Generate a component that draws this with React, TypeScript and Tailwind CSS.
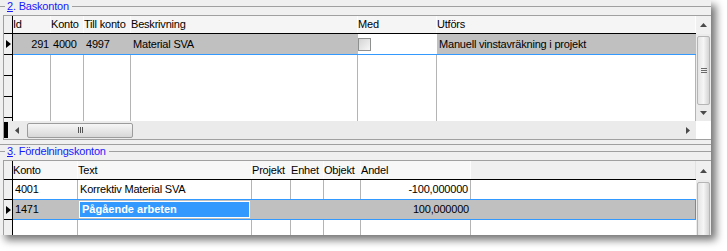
import React from "react";

type Col = { label: string; w: string; value?: string; right?: boolean; check?: boolean; edit?: boolean };

const topCols: Col[] = [
  { label: "Id", w: "w-[38px]", value: "291", right: true },
  { label: "Konto", w: "w-[33px]", value: "4000" },
  { label: "Till konto", w: "w-[47px]", value: "4997" },
  { label: "Beskrivning", w: "w-[227px]", value: "Material SVA" },
  { label: "Med", w: "w-[79px]", check: true },
  { label: "Utförs", w: "w-[259px]", value: "Manuell vinstavräkning i projekt" },
];

const bottomCols: Col[] = [
  { label: "Konto", w: "w-[65px]" },
  { label: "Text", w: "w-[174px]" },
  { label: "Projekt", w: "w-[39px]" },
  { label: "Enhet", w: "w-[33px]" },
  { label: "Objekt", w: "w-[37px]" },
  { label: "Andel", w: "w-[110px]", right: true },
];

const bottomRows = [
  ["4001", "Korrektiv Material SVA", "", "", "", "-100,000000"],
  ["1471", "Pågående arbeten", "", "", "", "100,000000"],
  ["", "", "", "", "", ""],
];

const UpArrow = () => (
  <svg width="7" height="4" viewBox="0 0 7 4">
    <path d="M0 4 L3.5 0 L7 4 Z" fill="#4a4a4a" />
  </svg>
);
const DownArrow = () => (
  <svg width="7" height="4" viewBox="0 0 7 4">
    <path d="M0 0 L7 0 L3.5 4 Z" fill="#4a4a4a" />
  </svg>
);
const LeftArrow = () => (
  <svg width="4" height="7" viewBox="0 0 4 7">
    <path d="M4 0 L0 3.5 L4 7 Z" fill="#4a4a4a" />
  </svg>
);
const RightArrow = () => (
  <svg width="4" height="7" viewBox="0 0 4 7">
    <path d="M0 0 L4 3.5 L0 7 Z" fill="#4a4a4a" />
  </svg>
);
const RowArrow = () => (
  <svg width="5" height="8" viewBox="0 0 5 8">
    <path d="M0 0 L5 4 L0 8 Z" fill="#000" />
  </svg>
);

const RowHead = ({ arrow, h }: { arrow?: boolean; h: string }) => (
  <div className={`w-[9px] shrink-0 ${h} bg-[#f0f0f0] border-r border-b border-black flex items-center justify-center`}>
    {arrow && <RowArrow />}
  </div>
);

const Title = ({ n, text }: { n: string; text: string }) => (
  <div className="flex items-start h-[15px]">
    <div className="w-[5px] mt-[6px] border-t border-[#a0a0a0]" />
    <span className="ml-[2px] leading-[12px] text-[#1818ff]">
      <span className="underline">{n}</span>. {text}
    </span>
    <div className="flex-1 ml-[3px] mt-[6px] border-t border-[#a0a0a0]" />
  </div>
);

const VScroll = ({ up, thumb }: { up: string; thumb: string }) => (
  <div className="w-[15px] shrink-0 flex flex-col bg-[#ebebeb]">
    <div className={`${up} shrink-0 flex items-center justify-center bg-[#f0f0f0]`}>
      <UpArrow />
    </div>
    <div className={`${thumb} shrink-0 mt-[2px] mx-[1px] rounded-[2px] border border-[#b5b5b5] bg-gradient-to-r from-[#e4e4e4] via-[#f6f6f6] to-[#d4d4d4] flex flex-col items-center justify-center gap-[1px]`}>
      <div className="w-[6px] border-t border-[#6a6a6a]" />
      <div className="w-[6px] border-t border-[#6a6a6a]" />
      <div className="w-[6px] border-t border-[#6a6a6a]" />
    </div>
  </div>
);

export default function App() {
  return (
    <div className="w-[727px] h-[251px] bg-white font-['Liberation_Sans',Arial,sans-serif] text-[11px] tracking-[-0.2px] text-black">
      <div className="w-[711px] h-[235px] bg-[#f0f0f0] overflow-hidden flex flex-col shadow-[5px_5px_8px_rgba(0,0,0,0.55)]">
        <Title n="2" text="Baskonton" />

        {/* Baskonton grid */}
        <div className="ml-[3px] w-[708px] h-[125px] shrink-0 border-l border-t border-b border-[#a0a0a0] flex">
          <div className="w-[692px] flex flex-col">
            <div className="flex h-[18px] border-b border-black">
              <div className="w-[9px] shrink-0 bg-[#f0f0f0] border-r border-black" />
              {topCols.map((c) => (
                <div key={c.label} className={`${c.w} shrink-0 flex items-center bg-[#f5f5f5] border-r border-[#fdfdfd] whitespace-nowrap`}>
                  {c.label}
                </div>
              ))}
            </div>
            <div className="h-[87px] overflow-hidden flex flex-col">
              <div className="flex h-[21px] shrink-0">
                <RowHead arrow h="h-[21px]" />
                <div className="flex flex-1 border-b border-r border-[#3399ff]">
                  {topCols.map((c) =>
                    c.check ? (
                      <div key={c.label} className={`${c.w} shrink-0 bg-white flex items-center`}>
                        <div className="w-[13px] h-[13px] border border-[#8e8f8f] bg-gradient-to-br from-[#d4d4d4] to-[#f7f7f7]" />
                      </div>
                    ) : (
                      <div
                        key={c.label}
                        className={`${c.w} shrink-0 flex items-center bg-[#c0c0c0] whitespace-nowrap ${c.right ? "justify-end pr-[2px]" : "pl-[2px]"}`}
                      >
                        {c.value}
                      </div>
                    )
                  )}
                </div>
              </div>
              {[0, 1, 2, 3].map((r) => (
                <div key={r} className="flex h-[21px] shrink-0">
                  <RowHead h="h-[21px]" />
                  {topCols.map((c) => (
                    <div key={c.label} className={`${c.w} shrink-0 bg-white border-r border-[#b4b4b4]`} />
                  ))}
                </div>
              ))}
            </div>
            <div className="flex h-[18px] bg-[#ebebeb]">
              <div className="w-[4px] bg-black my-[1px]" />
              <div className="w-[17px] flex items-center justify-center">
                <LeftArrow />
              </div>
              <div className="ml-[2px] w-[106px] h-[15px] self-center rounded-[2px] border border-[#9c9c9c] bg-gradient-to-b from-[#f6f6f6] to-[#d8d8d8] flex items-center justify-center gap-[1px]">
                <div className="h-[6px] border-l border-[#555]" />
                <div className="h-[6px] border-l border-[#555]" />
                <div className="h-[6px] border-l border-[#555]" />
              </div>
              <div className="flex-1" />
              <div className="w-[16px] flex items-center justify-center">
                <RightArrow />
              </div>
            </div>
          </div>
          <div className="flex flex-col">
            <div className="h-[105px] flex flex-col">
              <VScroll up="h-[18px]" thumb="h-[69px]" />
              <div className="flex-1 w-[15px] bg-[#ebebeb] flex items-center justify-center">
                <DownArrow />
              </div>
            </div>
            <div className="h-[18px] w-[15px] bg-white" />
          </div>
        </div>

        {/* splitter + second group */}
        <div className="h-[4px] shrink-0" />
        <div className="border-t border-[#a0a0a0] shrink-0" />
        <Title n="3" text="Fördelningskonton" />

        {/* Fördelningskonton grid */}
        <div className="ml-[3px] w-[708px] flex-1 border-l border-t border-[#a0a0a0] flex overflow-hidden">
          <div className="w-[692px] flex flex-col">
            <div className="flex h-[19px] shrink-0 border-b border-black">
              <div className="w-[9px] shrink-0 bg-[#f0f0f0] border-r border-black" />
              {bottomCols.map((c) => (
                <div key={c.label} className={`${c.w} shrink-0 flex items-center bg-[#f7f7f7] border-r border-[#fdfdfd] whitespace-nowrap`}>
                  {c.label}
                </div>
              ))}
              <div className="flex-1 bg-[#f0f0f0] border-r border-[#e2e2e2]" />
            </div>
            {bottomRows.map((row, r) => {
              const sel = r === 1;
              return (
                <div key={r} className="flex h-[20px] shrink-0">
                  <RowHead arrow={sel} h="h-[20px]" />
                  <div
                    className={`flex flex-1 ${r < 2 ? "border-b border-[#3399ff]" : ""} ${sel ? "border-r border-[#3399ff] bg-[#c0c0c0]" : "bg-white"}`}
                  >
                    {bottomCols.map((c, i) =>
                      sel && i === 1 ? (
                        <div key={c.label} className={`${c.w} shrink-0 flex items-center pl-[1px] py-[1px]`}>
                          <div className="w-[171px] h-full border border-white bg-[#3399ff] text-white font-bold tracking-normal pl-[2px] flex items-center whitespace-nowrap">
                            {row[i]}
                          </div>
                        </div>
                      ) : (
                        <div
                          key={c.label}
                          className={`${c.w} shrink-0 flex items-center whitespace-nowrap ${sel ? "" : "border-r border-[#b4b4b4]"} ${c.right ? "justify-end pr-[2px]" : "pl-[2px]"}`}
                        >
                          {row[i]}
                        </div>
                      )
                    )}
                    <div className="flex-1" />
                  </div>
                </div>
              );
            })}
          </div>
          <VScroll up="h-[19px]" thumb="h-[120px]" />
        </div>
      </div>
    </div>
  );
}
